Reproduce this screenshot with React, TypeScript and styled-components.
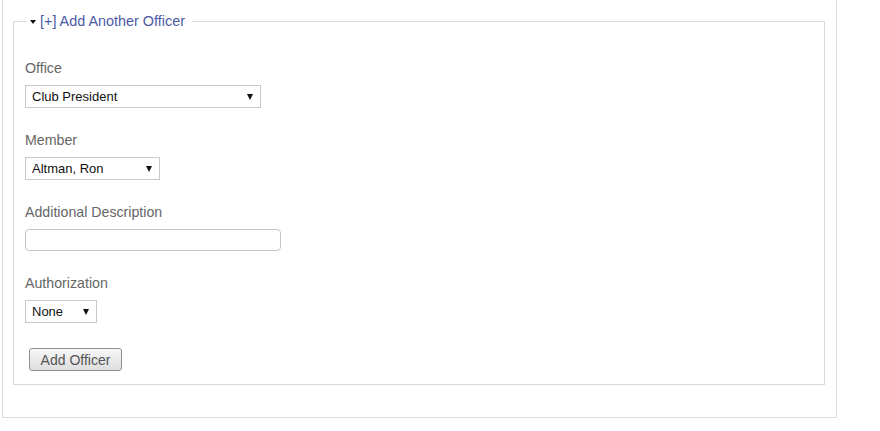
import styled, { createGlobalStyle } from "styled-components";

const GlobalStyle = createGlobalStyle`
  body {
    margin: 0;
    background: #fff;
    font-family: "Liberation Sans", Arial, sans-serif;
  }
`;

const Panel = styled.div`
  box-sizing: border-box;
  width: 835px;
  margin-left: 2px;
  padding: 11px 11px 32px 10px;
  border: 1px solid #dcdcdc;
  border-top: none;
`;

const Fieldset = styled.fieldset`
  margin: 0;
  padding: 27px 11px 13px 11px;
  border: 1px solid #d8d8d8;
  min-width: 0;
`;

const Legend = styled.legend`
  margin-left: 2px;
  padding: 0 7px 0 3px;
  font-size: 14.4px;
  line-height: 20px;
  color: #4b5aa5;
  display: flex;
  align-items: center;
  gap: 4px;
`;

const Caret = styled.span`
  width: 0;
  height: 0;
  border-left: 3.5px solid transparent;
  border-right: 3.5px solid transparent;
  border-top: 4px solid #111;
  margin-top: 1px;
`;

const Group = styled.div`
  margin-bottom: 22px;
  &:last-of-type {
    margin-bottom: 25px;
  }
`;

const Label = styled.label`
  display: block;
  font-size: 14.2px;
  line-height: 20px;
  color: #666;
  margin-bottom: 7px;
`;

const SelectWrap = styled.div<{ $w: number }>`
  position: relative;
  width: ${(p) => p.$w}px;
  height: 23px;
  &::after {
    content: "";
    position: absolute;
    right: 8px;
    top: 9px;
    border-left: 3px solid transparent;
    border-right: 3px solid transparent;
    border-top: 6px solid #111;
    pointer-events: none;
  }
`;

const Select = styled.select`
  appearance: none;
  box-sizing: border-box;
  width: 100%;
  height: 100%;
  margin: 0;
  padding: 0 20px 0 6px;
  border: 1px solid #c9c9c9;
  border-radius: 0;
  background: #fff;
  font-family: "Liberation Sans", Arial, sans-serif;
  font-size: 13px;
  color: #111;
  outline: none;
`;

const TextInput = styled.input`
  display: block;
  box-sizing: border-box;
  width: 256px;
  height: 22px;
  margin: 0;
  padding: 0 6px;
  border: 1px solid #c4c4c4;
  border-radius: 4px;
  font-family: "Liberation Sans", Arial, sans-serif;
  font-size: 13px;
  outline: none;
  margin-top: 1px;
`;

const Button = styled.button`
  box-sizing: border-box;
  margin-left: 4px;
  width: 93px;
  height: 23px;
  padding: 0;
  border: 1px solid #8f8f8f;
  border-radius: 3px;
  background: linear-gradient(#f7f7f7, #dedede);
  font-family: "Liberation Sans", Arial, sans-serif;
  font-size: 14px;
  color: #555;
`;

const fields = [
  { label: "Office", value: "Club President", width: 236 },
  { label: "Member", value: "Altman, Ron", width: 135 },
];

function App() {
  return (
    <>
      <GlobalStyle />
      <Panel>
        <Fieldset>
          <Legend>
            <Caret />
            [+] Add Another Officer
          </Legend>
          {fields.map((f) => (
            <Group key={f.label}>
              <Label>{f.label}</Label>
              <SelectWrap $w={f.width}>
                <Select defaultValue={f.value}>
                  <option>{f.value}</option>
                </Select>
              </SelectWrap>
            </Group>
          ))}
          <Group>
            <Label>Additional Description</Label>
            <TextInput type="text" />
          </Group>
          <Group>
            <Label>Authorization</Label>
            <SelectWrap $w={72}>
              <Select defaultValue="None">
                <option>None</option>
              </Select>
            </SelectWrap>
          </Group>
          <Button type="button">Add Officer</Button>
        </Fieldset>
      </Panel>
    </>
  );
}

export default App;
